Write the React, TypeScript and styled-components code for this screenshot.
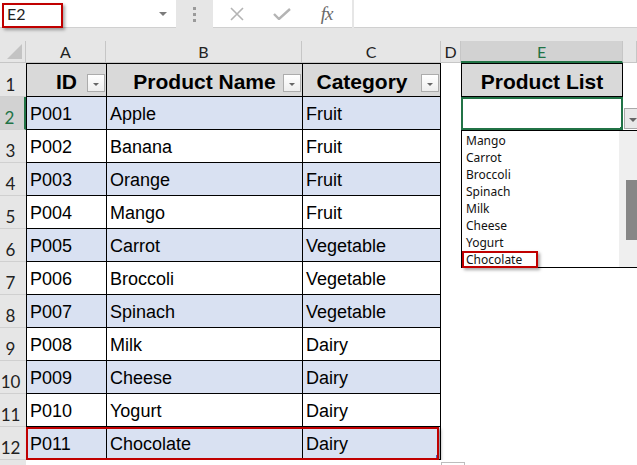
import React from "react";
import styled, { createGlobalStyle, css } from "styled-components";

const GREEN = "#217346";
const COLS = "26px 80px 196px 139px 20px 162px 14px";

const rows: Array<[string, string, string]> = [
  ["P001", "Apple", "Fruit"],
  ["P002", "Banana", "Fruit"],
  ["P003", "Orange", "Fruit"],
  ["P004", "Mango", "Fruit"],
  ["P005", "Carrot", "Vegetable"],
  ["P006", "Broccoli", "Vegetable"],
  ["P007", "Spinach", "Vegetable"],
  ["P008", "Milk", "Dairy"],
  ["P009", "Cheese", "Dairy"],
  ["P010", "Yogurt", "Dairy"],
  ["P011", "Chocolate", "Dairy"],
];

const listItems = ["Mango", "Carrot", "Broccoli", "Spinach", "Milk", "Cheese", "Yogurt", "Chocolate"];

const GlobalStyle = createGlobalStyle`
  html, body { margin: 0; padding: 0; background: #fff; overflow: hidden; }
  body { font-family: "Liberation Sans", Arial, sans-serif; }
`;

const Screen = styled.div`
  width: 637px;
  height: 465px;
  overflow: hidden;
  background: #fff;
`;

/* formula bar */
const Toolbar = styled.div`
  display: flex;
  align-items: flex-start;
  height: 41px;
  background: #e6e6e6;
`;

const NameBox = styled.div`
  position: relative;
  box-sizing: border-box;
  width: 176px;
  height: 28px;
  background: #fff;
  border-bottom: 1px solid #d0d0d0;
  display: flex;
  align-items: center;
  padding-left: 7px;
  font: 16px "Lato", "Open Sans", sans-serif;
  color: #222;
  &::after {
    content: "";
    position: absolute;
    right: 9px;
    top: 12px;
    border-left: 4px solid transparent;
    border-right: 4px solid transparent;
    border-top: 4px solid #7b7b7b;
  }
`;

const RedMark = styled.div<{ $l: number; $t: number; $w: number; $h: number }>`
  position: absolute;
  left: ${(p) => p.$l}px;
  top: ${(p) => p.$t}px;
  width: ${(p) => p.$w}px;
  height: ${(p) => p.$h}px;
  box-sizing: border-box;
  border: 2px solid #c00000;
  box-shadow: 2px 2px 3px rgba(0, 0, 0, 0.35);
  pointer-events: none;
`;

const Splitter = styled.div`
  width: 37px;
  height: 28px;
  display: flex;
  flex-direction: column;
  align-items: center;
  justify-content: center;
  gap: 3px;
  span {
    width: 3px;
    height: 3px;
    background: #9a9a9a;
  }
`;

const FxBox = styled.div`
  box-sizing: border-box;
  width: 139px;
  height: 28px;
  background: #fff;
  border-bottom: 1px solid #d0d0d0;
  display: flex;
  align-items: center;
  padding-left: 1px;
`;

const FxSlot = styled.div`
  width: 45px;
  display: flex;
  justify-content: center;
  align-items: center;
`;

const FxText = styled.span`
  font: italic 19px "Liberation Serif", "Times New Roman", serif;
  color: #6a6a6a;
  letter-spacing: -1px;
`;

const FormulaInput = styled.div`
  flex: 1;
  height: 28px;
  margin-left: 2px;
  box-sizing: border-box;
  background: #fff;
  border-bottom: 1px solid #d0d0d0;
`;

/* sheet */
const Sheet = styled.div`
  position: relative;
`;

const Row = styled.div<{ $h: number }>`
  position: relative;
  display: grid;
  grid-template-columns: ${COLS};
  height: ${(p) => p.$h}px;
`;

const Corner = styled.div`
  position: relative;
  background: #e6e6e6;
  border-right: 1px solid #c6c6c6;
  border-bottom: 1px solid #c6c6c6;
  box-sizing: border-box;
  &::after {
    content: "";
    position: absolute;
    right: 3px;
    bottom: 3px;
    border-left: 15px solid transparent;
    border-bottom: 15px solid #c3c3c3;
  }
`;

const ColHead = styled.div<{ $active?: boolean }>`
  box-sizing: border-box;
  display: flex;
  align-items: center;
  justify-content: center;
  font: 16px "Lato", "Open Sans", sans-serif;
  color: ${(p) => (p.$active ? GREEN : "#222")};
  background: ${(p) => (p.$active ? "#d2d2d2" : "#e6e6e6")};
  border-right: 1px solid #c6c6c6;
  border-bottom: ${(p) => (p.$active ? `2px solid ${GREEN}` : "1px solid #c6c6c6")};
`;

const RowHead = styled.div<{ $active?: boolean }>`
  box-sizing: border-box;
  display: flex;
  align-items: flex-end;
  justify-content: center;
  padding: 0 5px 1px 0;
  font: 17px "Lato", "Open Sans", sans-serif;
  color: ${(p) => (p.$active ? GREEN : "#222")};
  background: ${(p) => (p.$active ? "#d2d2d2" : "#e6e6e6")};
  border-bottom: 1px solid #d0d0d0;
  border-right: ${(p) => (p.$active ? `2px solid ${GREEN}` : "none")};
`;

const Cell = styled.div<{ $fill?: string; $boxed?: boolean; $last?: boolean }>`
  position: relative;
  box-sizing: border-box;
  display: flex;
  align-items: center;
  padding: 2px 0 0 3px;
  white-space: nowrap;
  overflow: hidden;
  font: 18px "Liberation Sans", Arial, sans-serif;
  color: #000;
  background: ${(p) => p.$fill ?? "#fff"};
  ${(p) =>
    p.$boxed &&
    css`
      border-left: 1px solid #000;
      border-bottom: 1px solid #000;
    `}
  ${(p) =>
    p.$last &&
    css`
      border-right: 1px solid #000;
    `}
`;

const HeadCell = styled(Cell)<{ $shift?: number }>`
  justify-content: center;
  padding: 3px ${(p) => p.$shift ?? 0}px 0 0;
  font: bold 21px "Liberation Sans", Arial, sans-serif;
  border-top: 1px solid #000;
  background: #d9d9d9;
`;

const FilterBtn = styled.div`
  position: absolute;
  right: 1px;
  top: 10px;
  width: 18px;
  height: 18px;
  box-sizing: border-box;
  border: 1px solid #acacac;
  background: linear-gradient(#ffffff, #eeeeee);
  &::after {
    content: "";
    position: absolute;
    left: 5px;
    top: 8px;
    border-left: 3px solid transparent;
    border-right: 3px solid transparent;
    border-top: 3px solid #666;
  }
`;

const ActiveCell = styled.div`
  position: relative;
  box-sizing: border-box;
  border: 2px solid ${GREEN};
  background: #fff;
  &::after {
    content: "";
    position: absolute;
    right: -3px;
    bottom: -3px;
    width: 4px;
    height: 4px;
    background: ${GREEN};
  }
`;

const ResizeDot = styled.div`
  position: absolute;
  right: 1px;
  bottom: 1px;
  width: 3px;
  height: 3px;
  background: #4a5fc1;
`;

const QuickBox = styled.div`
  position: absolute;
  left: 441px;
  top: 2px;
  width: 24px;
  height: 12px;
  box-sizing: border-box;
  border: 1px solid #bdbdbd;
  background: #fff;
`;

/* data validation dropdown */
const ArrowBtn = styled.div`
  position: absolute;
  left: 624px;
  top: 67px;
  width: 16px;
  height: 21px;
  box-sizing: border-box;
  border: 1px solid #a9a9a9;
  background: #e9e9e9;
  &::after {
    content: "";
    position: absolute;
    left: 4px;
    top: 9px;
    border-left: 4px solid transparent;
    border-right: 4px solid transparent;
    border-top: 4px solid #666;
  }
`;

const ListBox = styled.div`
  position: absolute;
  left: 461px;
  top: 89px;
  width: 178px;
  height: 138px;
  box-sizing: border-box;
  border: 1px solid #000;
  border-right: none;
  background: #fff;
  display: flex;
`;

const Items = styled.div`
  flex: 1;
  padding-top: 1px;
`;

const Item = styled.div`
  position: relative;
  height: 17px;
  line-height: 17px;
  padding-left: 4px;
  font: 12px "Noto Sans", "Open Sans", sans-serif;
  color: #111;
`;

const Scrollbar = styled.div`
  width: 20px;
  background: #efefef;
  padding: 49px 0 0 7px;
  box-sizing: border-box;
`;

const Thumb = styled.div`
  width: 11px;
  height: 60px;
  background: #878787;
`;

const XIcon = () => (
  <svg width="14" height="14" viewBox="0 0 14 14">
    <path d="M1 1 L13 13 M13 1 L1 13" stroke="#b4b4b4" strokeWidth="1.6" fill="none" />
  </svg>
);

const CheckIcon = () => (
  <svg width="18" height="12" viewBox="0 0 18 12">
    <path d="M1 6 L6 11 L17 1" stroke="#b4b4b4" strokeWidth="2.4" fill="none" />
  </svg>
);

export default function App() {
  return (
    <Screen>
      <GlobalStyle />
      <Toolbar>
        <NameBox>
          E2
          <RedMark $l={2} $t={3} $w={61} $h={25} />
        </NameBox>
        <Splitter>
          <span />
          <span />
          <span />
        </Splitter>
        <FxBox>
          <FxSlot>
            <XIcon />
          </FxSlot>
          <FxSlot>
            <CheckIcon />
          </FxSlot>
          <FxSlot>
            <FxText>fx</FxText>
          </FxSlot>
        </FxBox>
        <FormulaInput />
      </Toolbar>

      <Sheet>
        <Row $h={22}>
          <Corner />
          <ColHead>A</ColHead>
          <ColHead>B</ColHead>
          <ColHead>C</ColHead>
          <ColHead>D</ColHead>
          <ColHead $active>E</ColHead>
          <ColHead />
        </Row>

        <Row $h={34}>
          <RowHead>1</RowHead>
          <HeadCell $boxed>
            ID
            <FilterBtn />
          </HeadCell>
          <HeadCell $boxed>
            Product Name
            <FilterBtn />
          </HeadCell>
          <HeadCell $boxed $last $shift={19}>
            Category
            <FilterBtn />
          </HeadCell>
          <Cell />
          <HeadCell $boxed $last>Product List</HeadCell>
          <Cell />
        </Row>

        {rows.map(([id, name, cat], i) => {
          const fill = i % 2 === 0 ? "#d9e1f2" : "#fff";
          const last = i === rows.length - 1;
          return (
            <Row $h={33} key={id}>
              <RowHead $active={i === 0}>{i + 2}</RowHead>
              <Cell $boxed $fill={fill}>{id}</Cell>
              <Cell $boxed $fill={fill}>{name}</Cell>
              <Cell $boxed $last $fill={fill}>
                {cat}
                {last && <ResizeDot />}
              </Cell>
              <Cell />
              {i === 0 ? <ActiveCell /> : <Cell />}
              <Cell />
              {last && <RedMark $l={26} $t={0} $w={413} $h={33} />}
            </Row>
          );
        })}

        <Row $h={20}>
          <RowHead />
          <Cell />
          <Cell />
          <Cell />
          <Cell />
          <Cell />
          <Cell />
          <QuickBox />
        </Row>

        <ArrowBtn />
        <ListBox>
          <Items>
            {listItems.map((item) => (
              <Item key={item}>
                {item}
                {item === "Chocolate" && <RedMark $l={0} $t={0} $w={76} $h={17} />}
              </Item>
            ))}
          </Items>
          <Scrollbar>
            <Thumb />
          </Scrollbar>
        </ListBox>
      </Sheet>
    </Screen>
  );
}
